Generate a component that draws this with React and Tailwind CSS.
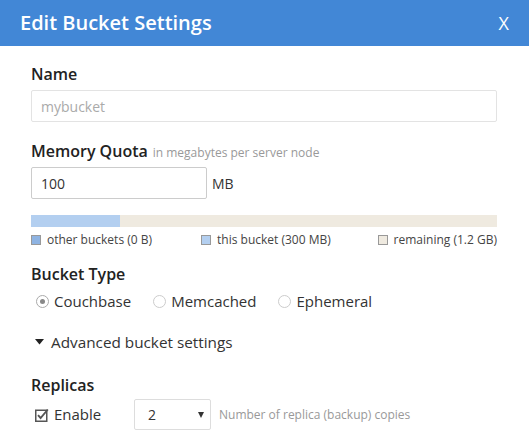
export default function App() {
  const font = { fontFamily: '"Open Sans", "Liberation Sans", sans-serif' };
  return (
    <div className="w-[529px] h-[436px] bg-white overflow-hidden text-[#333]" style={font}>
      <div className="h-[46px] bg-[#4287d6] flex items-center justify-between pl-[20px] pr-[20px]">
        <div className="text-white text-[20px] font-semibold leading-none">Edit Bucket Settings</div>
        <div className="text-white text-[18px] leading-none">X</div>
      </div>
      <div className="pl-[31px] pr-[32px]">
        <div className="mt-[18px] text-[16px] font-semibold leading-[20px] text-[#222]">Name</div>
        <div className="mt-[6px] h-[32px] border border-[#e3e3e3] rounded-[2px] flex items-center pl-[9px] text-[14px] text-[#aaa]">mybucket</div>

        <div className="mt-[19px] flex items-baseline leading-[20px]">
          <span className="text-[16px] font-semibold text-[#222]">Memory Quota</span>
          <span className="ml-[5px] text-[12px] text-[#999]">in megabytes per server node</span>
        </div>
        <div className="mt-[4px] flex items-center">
          <div className="w-[176px] h-[32px] border border-[#ccc] rounded-[2px] flex items-center pl-[9px] text-[14px] text-[#333]">100</div>
          <span className="ml-[5px] text-[14px] text-[#333]">MB</span>
        </div>
        <div className="mt-[16px] h-[12px] bg-[#efeae0] flex">
          <div className="w-[89px] bg-[#b3cff0]"></div>
        </div>
        <div className="mt-[6px] flex text-[12px] text-[#444] leading-[14px]">
          <div className="flex items-center">
            <span className="w-[10px] h-[10px] bg-[#8eb3e2] border border-[#999] mr-[6px]"></span>
            other buckets (0 B)
          </div>
          <div className="flex items-center ml-[49px]">
            <span className="w-[10px] h-[10px] bg-[#b3cff0] border border-[#999] mr-[6px]"></span>
            this bucket (300 MB)
          </div>
          <div className="flex items-center ml-auto">
            <span className="w-[10px] h-[10px] bg-[#efeae0] border border-[#999] mr-[6px]"></span>
            remaining (1.2 GB)
          </div>
        </div>

        <div className="mt-[17px] text-[16px] font-semibold leading-[20px] text-[#222]">Bucket Type</div>
        <div className="mt-[7px] flex items-center text-[15px] text-[#333] leading-[20px] pl-[5px]">
          <label className="flex items-center">
            <span className="w-[13px] h-[13px] rounded-full border border-[#aaa] flex items-center justify-center mr-[5px]">
              <span className="w-[5px] h-[5px] rounded-full bg-[#888]"></span>
            </span>
            Couchbase
          </label>
          <label className="flex items-center ml-[22px]">
            <span className="w-[13px] h-[13px] rounded-full border border-[#ccc] mr-[5px]"></span>
            Memcached
          </label>
          <label className="flex items-center ml-[22px]">
            <span className="w-[13px] h-[13px] rounded-full border border-[#ccc] mr-[5px]"></span>
            Ephemeral
          </label>
        </div>

        <div className="mt-[21px] flex items-center text-[15.3px] text-[#333] leading-[20px] pl-[4px]">
          <svg width="9" height="6" viewBox="0 0 9 6" className="mr-[7px]">
            <polygon points="0,0 9,0 4.5,5.5" fill="#222" />
          </svg>
          Advanced bucket settings
        </div>

        <div className="mt-[23px] text-[16px] font-semibold leading-[20px] text-[#222]">Replicas</div>
        <div className="mt-[4px] flex items-center">
          <label className="flex items-center text-[15px] text-[#333] pl-[4px] w-[103px]">
            <svg width="14" height="14" viewBox="0 0 14 14" className="mr-[5px]">
              <rect x="0.75" y="2.25" width="11" height="11" fill="white" stroke="#555" strokeWidth="1.5" />
              <path d="M3 7.2 L5.6 10 L12.8 1.5" fill="none" stroke="#555" strokeWidth="1.9" />
            </svg>
            Enable
          </label>
          <div className="w-[77px] h-[31px] border border-[#ddd] rounded-[2px] flex items-center justify-between pl-[13px] pr-[6px] text-[14px] text-[#333]">
            2
            <svg width="6" height="6" viewBox="0 0 6 6">
              <polygon points="0,0 6,0 3,6" fill="#333" />
            </svg>
          </div>
          <span className="ml-[8px] text-[12px] text-[#999]">Number of replica (backup) copies</span>
        </div>
      </div>
    </div>
  );
}
